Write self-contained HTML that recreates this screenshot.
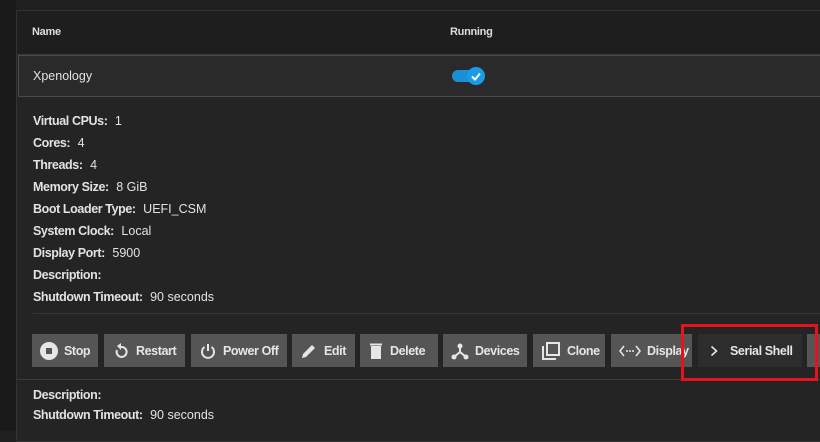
<!DOCTYPE html>
<html><head><style>
body{margin:0;width:820px;height:431px;background:#1f1f1f;font-family:"Liberation Sans",sans-serif;overflow:hidden;position:relative;color:#e8e8e8}
.strip{position:absolute;left:0;top:0;width:16px;height:431px;background:#1a1a1a}
.card{position:absolute;left:16px;top:10px;width:820px;height:430px;background:#242424;border:1px solid #333}
.hdr{position:absolute;left:0;top:0;right:0;height:43px;background:#1e1e1e;border-bottom:1px solid #3a3a3a}
.h{position:absolute;top:15px;font-size:11px;font-weight:bold;color:#ddd;letter-spacing:-0.3px}
.row{position:absolute;left:1px;top:44px;width:820px;height:42px;background:#2a2a2a;border:1px solid #4a4a4a;box-sizing:border-box}
.l{position:absolute;left:16px;font-size:12.5px;color:#e2e2e2;letter-spacing:0}
.l b{letter-spacing:-0.4px;margin-right:4px}
.sep{position:absolute;height:1px;background:#363636}
.btn{position:absolute;top:334px;height:33px;background:#555;color:#e6e6e6;font-size:12.5px;font-weight:bold;letter-spacing:-0.4px;display:flex;align-items:center;gap:6px;padding-left:8px;box-sizing:border-box;white-space:nowrap;overflow:hidden}
.btn svg{flex:none}
</style></head><body>
<div class="strip"></div>
<div class="card">
<div class="hdr"><div class="h" style="left:15px">Name</div><div class="h" style="left:433px">Running</div></div>
<div class="row"><div class="l" style="top:13px;left:14px">Xpenology</div>
<div style="position:absolute;left:433px;top:14px;width:28px;height:12px;border-radius:6px;background:#1a8fd6"></div>
<div style="position:absolute;left:448px;top:11px;width:18px;height:18px;border-radius:50%;background:#1a9be6"><svg width="18" height="18"><path d="M5 9.5l3 3 5-6" stroke="#fff" stroke-width="2" fill="none"/></svg></div></div>
<div class="l" style="top:103px"><b>Virtual CPUs:</b> 1</div>
<div class="l" style="top:125px"><b>Cores:</b> 4</div>
<div class="l" style="top:147px"><b>Threads:</b> 4</div>
<div class="l" style="top:169px"><b>Memory Size:</b> 8 GiB</div>
<div class="l" style="top:191px"><b>Boot Loader Type:</b> UEFI_CSM</div>
<div class="l" style="top:213px"><b>System Clock:</b> Local</div>
<div class="l" style="top:235px"><b>Display Port:</b> 5900</div>
<div class="l" style="top:257px"><b>Description:</b></div>
<div class="l" style="top:279px"><b>Shutdown Timeout:</b> 90 seconds</div>
<div class="sep" style="left:16px;top:302px;width:800px"></div>
<div class="sep" style="left:0;top:368px;width:820px;background:#3a3a3a"></div>
<div class="l" style="top:377px"><b>Description:</b></div>
<div class="l" style="top:397px"><b>Shutdown Timeout:</b> 90 seconds</div>
</div>
<div class="btn" style="left:32px;width:66px"><svg width="18" height="18"><circle cx="9" cy="9" r="9" fill="#e6e6e6"/><rect x="6" y="6" width="6" height="6" fill="#555"/></svg>Stop</div>
<div class="btn" style="left:104px;width:81px"><svg width="18" height="18"><path d="M5 8a5 5 0 1 0 4-3" stroke="#e6e6e6" stroke-width="2" fill="none"/><path d="M9 1v7l-4-4z" fill="#e6e6e6"/></svg>Restart</div>
<div class="btn" style="left:191px;width:96px"><svg width="18" height="18"><path d="M5.5 5a6 6 0 1 0 7 0" stroke="#e6e6e6" stroke-width="2" fill="none"/><path d="M9 2v7" stroke="#e6e6e6" stroke-width="2"/></svg>Power Off</div>
<div class="btn" style="left:292px;width:63px"><svg width="18" height="18"><path d="M2 16l1-4 9-9 3 3-9 9z" fill="#e6e6e6"/></svg>Edit</div>
<div class="btn" style="left:360px;width:78px"><svg width="16" height="18"><rect x="3" y="4" width="10" height="13" fill="#e6e6e6"/><rect x="2" y="1.5" width="12" height="2" fill="#e6e6e6"/></svg>Delete</div>
<div class="btn" style="left:443px;width:84px"><svg width="18" height="18"><circle cx="9" cy="4" r="2.5" fill="#e6e6e6"/><circle cx="3" cy="15" r="2.5" fill="#e6e6e6"/><circle cx="15" cy="15" r="2.5" fill="#e6e6e6"/><path d="M9 4v6L3 15M9 10l6 5" stroke="#e6e6e6" stroke-width="2" fill="none"/></svg>Devices</div>
<div class="btn" style="left:533px;width:72px"><svg width="20" height="20"><rect x="6" y="2" width="12" height="12" stroke="#e6e6e6" stroke-width="2" fill="none"/><path d="M2 5v13h13" stroke="#e6e6e6" stroke-width="2" fill="none"/></svg>Clone</div>
<div class="btn" style="left:611px;width:81px"><svg width="22" height="14"><path d="M5 2L1 7l4 5M17 2l4 5-4 5" stroke="#e6e6e6" stroke-width="1.6" fill="none"/><circle cx="8" cy="7" r="1" fill="#e6e6e6"/><circle cx="11" cy="7" r="1" fill="#e6e6e6"/><circle cx="14" cy="7" r="1" fill="#e6e6e6"/></svg>Display</div>
<div class="btn" style="left:698px;width:104px;background:#2d2d2d;padding-left:12px;gap:12px"><svg width="8" height="12"><path d="M1.5 1.5l5 4.5-5 4.5" stroke="#e6e6e6" stroke-width="1.6" fill="none"/></svg>Serial Shell</div>
<div class="btn" style="left:807px;width:20px;background:#555"></div>
<div style="position:absolute;left:681px;top:324px;width:137px;height:57px;box-sizing:border-box;border:3px solid #e3141f"></div>
</body></html>
